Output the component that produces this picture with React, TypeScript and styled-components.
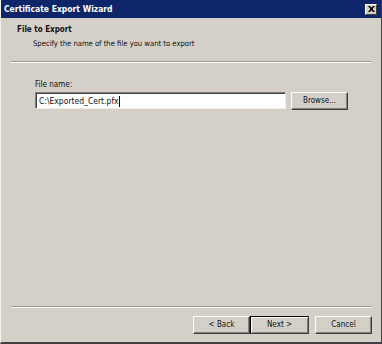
import styled, { createGlobalStyle } from "styled-components";

const Global = createGlobalStyle`
  html, body {
    margin: 0;
    padding: 0;
    background: #d4d0c8;
  }
  * {
    box-sizing: border-box;
  }
`;

const font = `"DejaVu Sans Condensed", "DejaVu Sans", "Liberation Sans", sans-serif`;

const Window = styled.div`
  width: 382px;
  height: 344px;
  display: flex;
  flex-direction: column;
  background: #d4d0c8;
  border-left: 1px solid #f4f3ef;
  border-right: 1px solid #404040;
  border-bottom: 2px solid #404040;
  font-family: ${font};
  font-size: 8px;
  color: #111;
`;

const TitleBar = styled.div`
  height: 18px;
  flex: none;
  display: flex;
  align-items: center;
  justify-content: space-between;
  padding: 0 4px 0 3px;
  background: #0c2669;
  color: #fff;
  font-weight: bold;
  font-size: 8.5px;
`;

const CloseButton = styled.div`
  width: 12px;
  height: 11px;
  display: flex;
  align-items: center;
  justify-content: center;
  background: #d4d0c8;
  border-top: 1px solid #fff;
  border-left: 1px solid #fff;
  border-right: 1px solid #404040;
  border-bottom: 1px solid #404040;
`;

const Header = styled.div`
  padding: 6px 0 0 16px;
  display: flex;
  flex-direction: column;
  gap: 2px;
`;

const HeaderTitle = styled.div`
  font-weight: bold;
  line-height: 12px;
`;

const HeaderText = styled.div`
  padding-left: 16px;
  line-height: 12px;
  font-size: 7.6px;
`;

const Separator = styled.div<{ $top: number }>`
  margin: ${(p) => p.$top}px 10px 0 10px;
  height: 2px;
  border-top: 1px solid #9a9892;
  border-bottom: 1px solid #fff;
  flex: none;
`;

const Body = styled.div`
  flex: 1;
  padding: 16px 0 0 34px;
  display: flex;
  flex-direction: column;
  gap: 1px;
`;

const FieldLabel = styled.label`
  line-height: 12px;
`;

const FieldRow = styled.div`
  display: flex;
  align-items: flex-start;
  gap: 5px;
`;

const TextInput = styled.div`
  width: 251px;
  height: 17px;
  background: #fff;
  border-top: 1px solid #808080;
  border-left: 1px solid #808080;
  border-right: 1px solid #eeede9;
  border-bottom: 1px solid #eeede9;
  box-shadow: inset 1px 1px 0 #404040;
  padding: 1px 0 0 3px;
  display: flex;
  align-items: center;
  font-size: 8.5px;
`;

const Caret = styled.span`
  display: inline-block;
  width: 1px;
  height: 11px;
  background: #000;
`;

const Button = styled.div<{ $default?: boolean }>`
  width: ${(p) => (p.$default ? 59 : 57)}px;
  height: 18px;
  display: flex;
  align-items: center;
  justify-content: center;
  background: #d4d0c8;
  border: 1px solid ${(p) => (p.$default ? "#000" : "transparent")};
  border-top-color: ${(p) => (p.$default ? "#000" : "#fff")};
  border-left-color: ${(p) => (p.$default ? "#000" : "#fff")};
  border-right-color: #404040;
  border-bottom-color: #404040;
  box-shadow: ${(p) =>
    p.$default
      ? "inset 1px 1px 0 #fff, inset -1px -1px 0 #808080"
      : "inset -1px -1px 0 #808080"};
  line-height: 12px;
`;

const Footer = styled.div`
  display: flex;
  justify-content: flex-end;
  gap: 6px;
  padding: 8px 9px 8px 0;
  flex: none;
`;

const ButtonPair = styled.div`
  display: flex;
`;

export default function App() {
  return (
    <>
      <Global />
      <Window>
        <TitleBar>
          <span>Certificate Export Wizard</span>
          <CloseButton>
            <svg width="7" height="6" viewBox="0 0 7 6">
              <path d="M0 0h2l1.5 1.8L5 0h2L4.5 3 7 6H5L3.5 4.2 2 6H0l2.5-3z" fill="#000" />
            </svg>
          </CloseButton>
        </TitleBar>
        <Header>
          <HeaderTitle>File to Export</HeaderTitle>
          <HeaderText>Specify the name of the file you want to export</HeaderText>
        </Header>
        <Separator $top={11} />
        <Body>
          <FieldLabel>File name:</FieldLabel>
          <FieldRow>
            <TextInput>
              C:\Exported_Cert.pfx
              <Caret />
            </TextInput>
            <Button>Browse...</Button>
          </FieldRow>
        </Body>
        <Separator $top={0} />
        <Footer>
          <ButtonPair>
            <Button>&lt; Back</Button>
            <Button $default>Next &gt;</Button>
          </ButtonPair>
          <Button>Cancel</Button>
        </Footer>
      </Window>
    </>
  );
}
